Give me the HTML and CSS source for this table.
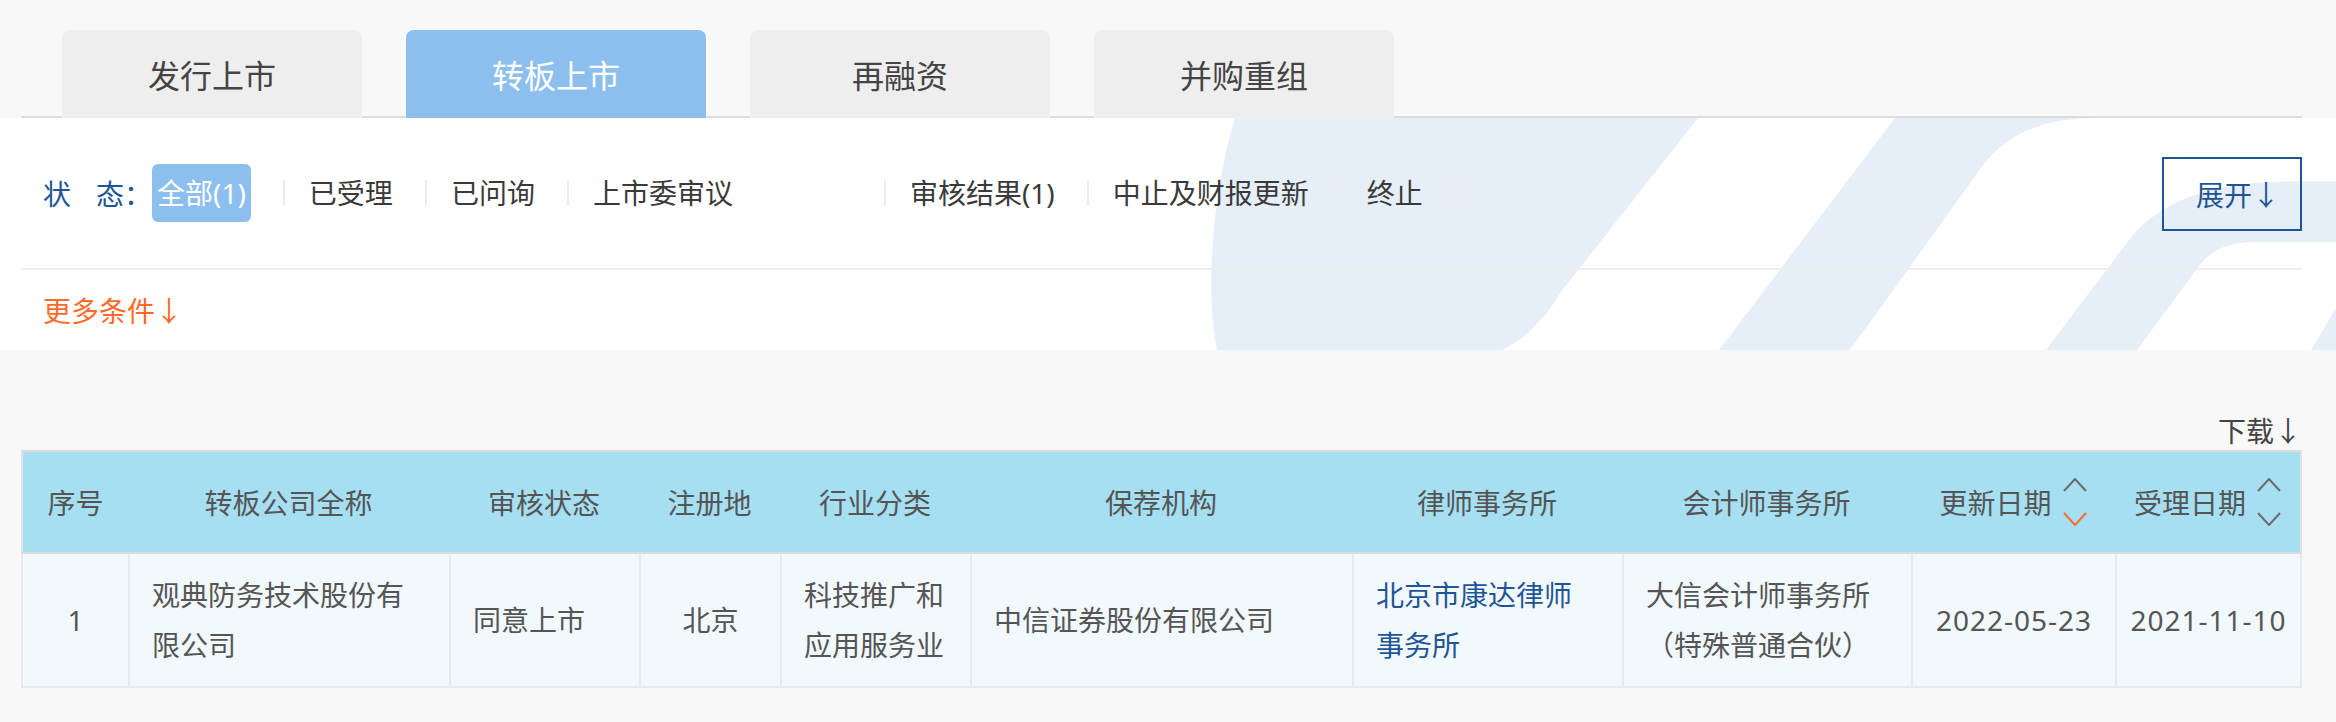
FILE: index.html
```html
<!DOCTYPE html>
<html lang="zh-CN">
<head>
<meta charset="utf-8">
<title>转板上市</title>
<link rel="stylesheet" href="styles.css">
</head>
<body>
<div class="tabbar">
  <div class="wrap tabs">
    <a class="tab">发行上市</a>
    <a class="tab active">转板上市</a>
    <a class="tab">再融资</a>
    <a class="tab">并购重组</a>
  </div>
</div>

<div class="panel">
  <svg class="deco" viewBox="0 118 2336 234" preserveAspectRatio="none" aria-hidden="true">
    <path d="M1235,118 L1698,118 L1562,292 Q1536,336 1502,352 L1217,352 C1206,300 1210,200 1235,118 Z"/>
    <path d="M1895,118 L2095,118 Q2017,118 1982,167 L1850,352 L1719,352 Z"/>
    <path d="M2046,352 L2126,245 Q2170,182 2290,182 L2336,182 L2336,243 L2252,243 Q2216,244 2200,266 L2137,352 Z"/>
    <path d="M2311,352 L2336,310 L2336,352 Z"/>
  </svg>
  <div class="wrap panel-inner">
    <div class="status-row">
      <span class="lbl">状<i class="gap"></i>态：</span>
      <a class="st on">全部(1)</a><i class="sep"></i>
      <a class="st">已受理</a><i class="sep"></i>
      <a class="st">已问询</a><i class="sep"></i>
      <a class="st wide">上市委审议</a><i class="sep"></i>
      <a class="st">审核结果(1)</a><i class="sep"></i>
      <a class="st">中止及财报更新</a><i class="sep"></i>
      <a class="st">终止</a><i class="sep"></i>
      <button class="expand" type="button">展开<span class="ar">↓</span></button>
    </div>
    <div class="more-row">
      <a class="more">更多条件<span class="ar">↓</span></a>
    </div>
  </div>
</div>

<div class="wrap">
  <div class="dl-row"><a class="dl">下载<span class="ar">↓</span></a></div>
  <table class="grid">
    <colgroup>
      <col class="w1"><col class="w2"><col class="w3"><col class="w4"><col class="w5">
      <col class="w6"><col class="w7"><col class="w8"><col class="w9"><col class="w10">
    </colgroup>
    <thead>
      <tr>
        <th>序号</th>
        <th>转板公司全称</th>
        <th>审核状态</th>
        <th>注册地</th>
        <th>行业分类</th>
        <th>保荐机构</th>
        <th>律师事务所</th>
        <th>会计师事务所</th>
        <th><span class="hd">更新日期<svg class="sorter" viewBox="0 0 24 48" aria-hidden="true"><polyline class="up" points="1,13 12,1 23,13"/><polyline class="dn act" points="1,35 12,47 23,35"/></svg></span></th>
        <th><span class="hd">受理日期<svg class="sorter" viewBox="0 0 24 48" aria-hidden="true"><polyline class="up" points="1,13 12,1 23,13"/><polyline class="dn" points="1,35 12,47 23,35"/></svg></span></th>
      </tr>
    </thead>
    <tbody>
      <tr>
        <td class="ctr">1</td>
        <td>观典防务技术股份有限公司</td>
        <td>同意上市</td>
        <td class="ctr">北京</td>
        <td>科技推广和应用服务业</td>
        <td>中信证券股份有限公司</td>
        <td class="law"><a class="link">北京市康达律师事务所</a></td>
        <td>大信会计师事务所（特殊普通合伙）</td>
        <td class="ctr date">2022-05-23</td>
        <td class="ctr date">2021-11-10</td>
      </tr>
    </tbody>
  </table>
</div>
</body>
</html>
```

FILE: styles.css
```css
* {
  box-sizing: border-box;
}

html, body {
  margin: 0;
  padding: 0;
}

body {
  background: #f8f8f8;
  font-family: "Noto Sans", "Noto Sans CJK SC", sans-serif;
  font-size: 28px;
  color: #444;
  height: 722px;
  overflow: hidden;
}

a {
  text-decoration: none;
  color: inherit;
}

.wrap {
  margin-left: 21px;
  width: 2281px;
}

.ar {
  font-family: "Noto Sans CJK SC", sans-serif;
}

/* ---------- tabs ---------- */
.tabbar {
  background: #f8f8f8;
}

.tabs {
  display: flex;
  gap: 44px;
  padding: 30px 0 0 41px;
  border-bottom: 2px solid #dcdcdc;
}

.tab {
  width: 300px;
  height: 88px;
  margin-bottom: -2px;
  line-height: 88px;
  text-align: center;
  font-size: 32px;
  color: #444;
  background: #eeeeee;
  border-radius: 8px 8px 0 0;
  font-family: "Noto Sans CJK SC", sans-serif;
}

.tab.active {
  background: #8dbfee;
  color: #fff;
}

/* ---------- filter panel ---------- */
.panel {
  position: relative;
  background: #fff;
  overflow: hidden;
}

.deco {
  position: absolute;
  left: 0;
  top: 0;
  width: 100%;
  height: 100%;
  fill: #e6eff8;
}

.panel-inner {
  position: relative;
}

.status-row {
  display: flex;
  align-items: center;
  height: 152px;
  padding-left: 22px;
  border-bottom: 2px solid #eeeeee;
}

.lbl {
  display: inline-flex;
  color: #1f5597;
  font-family: "Noto Sans CJK SC", sans-serif;
  line-height: 58px;
}

.lbl .gap {
  display: inline-block;
  width: 25px;
}

.st {
  padding: 0 5px;
  line-height: 58px;
  color: #3a3a3a;
  border-radius: 6px;
  white-space: nowrap;
}

.st.on {
  background: #8dbfee;
  color: #fff;
  margin-right: 5px;
}

.st.wide {
  margin-right: 119px;
}

.sep {
  display: inline-block;
  width: 2px;
  height: 26px;
  background: #ececec;
  margin: 0 19px 0 27px;
}

.expand {
  margin-left: auto;
  width: 140px;
  height: 74px;
  padding: 0 0 0 32px;
  text-align: left;
  border: 2px solid #1f5597;
  background: transparent;
  color: #1f5597;
  font-family: "Noto Sans CJK SC", sans-serif;
  font-size: 28px;
  line-height: 70px;
  margin-top: 2px;
}

.more-row {
  height: 80px;
  display: flex;
  align-items: center;
  padding-left: 22px;
}

.more {
  color: #ff6a2a;
  font-family: "Noto Sans CJK SC", sans-serif;
}

/* ---------- download ---------- */
.dl-row {
  height: 100px;
  display: flex;
  justify-content: flex-end;
  align-items: flex-end;
}

.dl {
  line-height: 40px;
  color: #444;
  font-family: "Noto Sans CJK SC", sans-serif;
}

/* ---------- table ---------- */
.grid {
  width: 2281px;
  table-layout: fixed;
  border-collapse: separate;
  border-spacing: 0;
  color: #555;
}

.w1 { width: 107px; }
.w2 { width: 321px; }
.w3 { width: 190px; }
.w4 { width: 141px; }
.w5 { width: 190px; }
.w6 { width: 382px; }
.w7 { width: 270px; }
.w8 { width: 289px; }
.w9 { width: 204px; }
.w10 { width: 187px; }

.grid th {
  height: 104px;
  padding: 0;
  background: #a6dff2;
  border-top: 2px solid #dcdcdc;
  border-bottom: 2px solid #dcdcdc;
  font-weight: normal;
  text-align: center;
  color: #555;
  white-space: nowrap;
}

.grid th:first-child {
  border-left: 2px solid #e2e2e2;
}

.grid th:last-child {
  border-right: 2px solid #e2e2e2;
}

.hd {
  display: inline-flex;
  align-items: center;
  gap: 11px;
}

.sorter {
  width: 24px;
  height: 48px;
  fill: none;
  stroke-width: 2;
}

.sorter .up,
.sorter .dn {
  stroke: #6a6a6a;
}

.sorter .dn.act {
  stroke: #ff6a2a;
}

.grid td {
  height: 134px;
  padding: 0 22px;
  background: #f2f9fd;
  border-left: 2px solid #e6eaec;
  border-bottom: 2px solid #e6eaec;
  line-height: 50px;
  vertical-align: middle;
  text-align: left;
}

.grid td:last-child {
  border-right: 2px solid #e6eaec;
}

.grid td.ctr {
  text-align: center;
}

.grid td.date {
  padding: 0;
  white-space: nowrap;
  letter-spacing: 1px;
}

.grid td.law {
  padding-right: 34px;
}

.link {
  color: #1f5597;
}
```
